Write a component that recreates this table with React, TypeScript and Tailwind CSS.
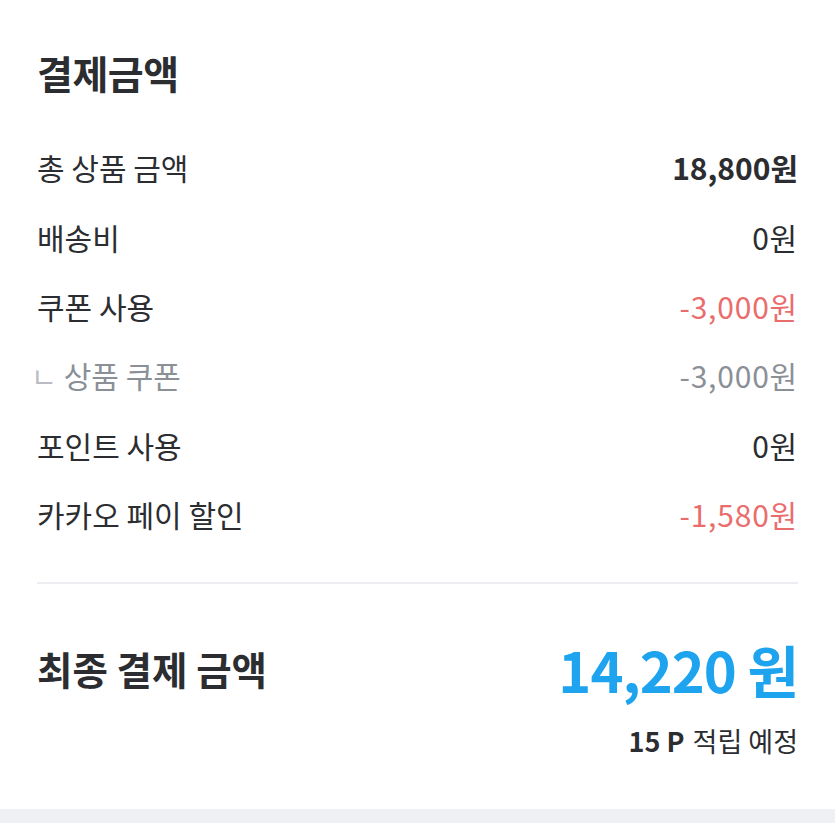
const ROWS = [
  { label: "총 상품 금액", value: "18,800원", tone: "strong" },
  { label: "배송비", value: "0원", tone: "normal" },
  { label: "쿠폰 사용", value: "-3,000원", tone: "minus" },
  { label: "상품 쿠폰", value: "-3,000원", tone: "sub" },
  { label: "포인트 사용", value: "0원", tone: "normal" },
  { label: "카카오 페이 할인", value: "-1,580원", tone: "minus" },
];

function valueClass(tone: string) {
  if (tone === "strong") return "text-[#2b2d31] font-bold";
  if (tone === "minus") return "text-[#ea6d6d] tracking-[0.8px]";
  if (tone === "sub") return "text-[#8b9097] tracking-[0.8px]";
  return "text-[#2b2d31] tracking-[0.8px]";
}

export default function App() {
  return (
    <div
      className="w-[835px] min-h-[823px] bg-white flex flex-col"
      style={{ fontFamily: '"Noto Sans CJK KR", "Noto Sans", sans-serif' }}
    >
      <section className="px-[37px] pt-[48px] pb-[52px]">
        <h2 className="text-[39px] leading-[48px] font-bold text-[#2b2d31] tracking-[-0.5px]">결제금액</h2>

        <div className="mt-[37px] flex flex-col">
          {ROWS.map((row) => (
            <div key={row.label} className="h-[69.4px] flex items-center justify-between text-[30px]">
              {row.tone === "sub" ? (
                <span className="flex items-center text-[#8b9097]">
                  <span className="text-[28px] leading-none text-[#b9bdc3] mr-[7px] -ml-[6px]">ㄴ</span>
                  {row.label}
                </span>
              ) : (
                <span className="text-[#2b2d31]">{row.label}</span>
              )}
              <span className={valueClass(row.tone)}>{row.value}</span>
            </div>
          ))}
        </div>

        <div className="mt-[33px] h-[2px] bg-[#eceef1]" />

        <div className="mt-[50px] h-[70px] flex items-center justify-between">
          <span className="text-[38.5px] font-bold text-[#2b2d31]">최종 결제 금액</span>
          <span className="text-[56px] font-bold text-[#1ea3ef] tracking-[-1px]">14,220 원</span>
        </div>

        <div className="mt-[21px] h-[32px] flex items-center justify-end text-[27px] text-[#2b2d31]">
          <span className="font-bold mr-[8px]">15 P</span>
          <span>적립 예정</span>
        </div>
      </section>
      <div className="flex-1 bg-[#eef0f3]" />
    </div>
  );
}
